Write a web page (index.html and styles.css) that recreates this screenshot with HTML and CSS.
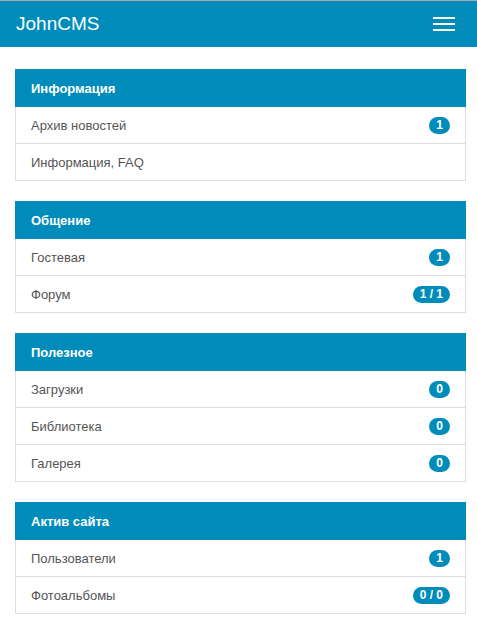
FILE: index.html
```html
<!DOCTYPE html>
<html lang="ru">
<head>
<meta charset="utf-8">
<title>JohnCMS</title>
<link rel="stylesheet" href="styles.css">
</head>
<body>
<header class="topbar">
  <div class="brand">JohnCMS</div>
  <button class="menu" aria-label="Меню">
    <svg width="22" height="14" viewBox="0 0 22 14"><rect x="0" y="0" width="22" height="2" fill="#fff"/><rect x="0" y="6" width="22" height="2" fill="#fff"/><rect x="0" y="12" width="22" height="2" fill="#fff"/></svg>
  </button>
</header>
<main class="content">
  <section class="panel">
    <div class="panel-title">Информация</div>
    <div class="row"><span>Архив новостей</span><span class="badge">1</span></div>
    <div class="row"><span>Информация, FAQ</span></div>
  </section>
  <section class="panel">
    <div class="panel-title">Общение</div>
    <div class="row"><span>Гостевая</span><span class="badge">1</span></div>
    <div class="row"><span>Форум</span><span class="badge">1 / 1</span></div>
  </section>
  <section class="panel">
    <div class="panel-title">Полезное</div>
    <div class="row"><span>Загрузки</span><span class="badge">0</span></div>
    <div class="row"><span>Библиотека</span><span class="badge">0</span></div>
    <div class="row"><span>Галерея</span><span class="badge">0</span></div>
  </section>
  <section class="panel">
    <div class="panel-title">Актив сайта</div>
    <div class="row"><span>Пользователи</span><span class="badge">1</span></div>
    <div class="row"><span>Фотоальбомы</span><span class="badge">0 / 0</span></div>
  </section>
</main>
</body>
</html>
```
FILE: styles.css
```css
* { box-sizing: border-box; }
html, body { margin: 0; padding: 0; background: #fff; }
body { font-family: "Liberation Sans", Arial, sans-serif; color: #555; }
.topbar {
  height: 47px;
  background: #008cba;
  border-top: 1px solid #aaa;
  display: flex;
  align-items: center;
  justify-content: space-between;
  padding: 0 22px 0 16px;
}
.brand { color: #fff; font-size: 19px; line-height: 1; margin-top: -2px; }
.menu { background: none; border: 0; padding: 0; display: flex; cursor: pointer; margin-top: -1px; }
.content { padding: 22px 11px 0 15px; display: flex; flex-direction: column; gap: 20px; }
.panel { border-left: 1px solid #ddd; border-right: 1px solid #ddd; }
.panel-title {
  background: #008cba;
  color: #fff;
  font-weight: bold;
  font-size: 13px;
  height: 38px;
  display: flex;
  align-items: center;
  padding: 0 16px;
  margin: 0 -1px;
}
.row {
  height: 37px;
  display: flex;
  align-items: center;
  justify-content: space-between;
  padding: 0 15px 0 15px;
  font-size: 13px;
  color: #555;
  border-bottom: 1px solid #ddd;
}
.badge {
  background: #008cba;
  color: #fff;
  font-weight: bold;
  font-size: 12px;
  min-width: 21px;
  height: 17px;
  border-radius: 9px;
  padding: 0 7px;
  display: inline-flex;
  align-items: center;
  justify-content: center;
  line-height: 1;
}
```
